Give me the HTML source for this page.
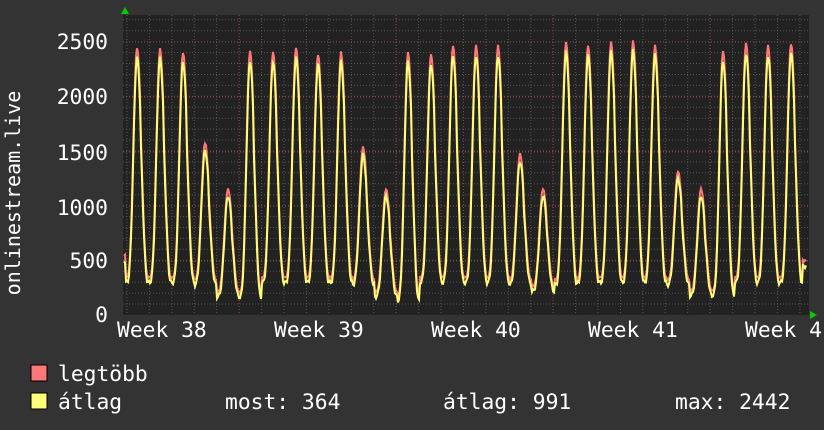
<!DOCTYPE html>
<html><head><meta charset="utf-8"><style>
body{margin:0;width:824px;height:430px;background:#333;overflow:hidden;font-family:"DejaVu Sans Mono","Liberation Mono",monospace;color:#fff}
.t{position:absolute;font-size:21.3px;white-space:pre;line-height:1}
</style></head><body>
<svg id="s" width="824" height="430" style="position:absolute;left:0;top:0">
<rect x="123" y="15" width="686" height="300" fill="#222"/>
<g id="grid"></g>
<polyline id="rmax" fill="none" stroke="#ff7777" stroke-width="2"/>
<polyline id="ravg" fill="none" stroke="#ffff77" stroke-width="2"/>
<polygon points="121,14 129,14 125,7" fill="#0c0"/>
<polygon points="810,311 810,319 817,315" fill="#0c0"/>
<rect x="31" y="365" width="16" height="16" fill="#ff7777" stroke="#000"/>
<rect x="31" y="393" width="16" height="16" fill="#ffff77" stroke="#000"/>
<text x="-193" y="20" transform="rotate(-90)" text-anchor="middle" fill="#fff" font-family="DejaVu Sans Mono,monospace" font-size="20">onlinestream.live</text>
</svg>
<div class="t" style="right:716px;top:32px">2500</div>
<div class="t" style="right:716px;top:87px">2000</div>
<div class="t" style="right:716px;top:143px">1500</div>
<div class="t" style="right:716px;top:198px">1000</div>
<div class="t" style="right:716px;top:251px">500</div>
<div class="t" style="right:716px;top:305px">0</div>
<div class="t" style="left:117px;top:320px">Week 38</div>
<div class="t" style="left:274px;top:320px">Week 39</div>
<div class="t" style="left:431px;top:320px">Week 40</div>
<div class="t" style="left:588px;top:320px">Week 41</div>
<div class="t" style="left:745px;top:320px">Week 4</div>
<div class="t" style="left:58px;top:364px">legtöbb</div>
<div class="t" style="left:58px;top:392px">átlag</div>
<div class="t" style="left:225px;top:392px">most: 364</div>
<div class="t" style="left:443px;top:392px">átlag: 991</div>
<div class="t" style="left:675px;top:392px">max: 2442</div>
<script>
var g=document.getElementById('grid'),h='';
for(var y=315-11;y>15;y-=10.93){h+='<line x1="123" x2="809" y1="'+y.toFixed(1)+'" y2="'+y.toFixed(1)+'" stroke="#555" stroke-dasharray="1,2"/>';}
for(var x=127;x<809;x+=22.43){h+='<line y1="15" y2="315" x1="'+x.toFixed(1)+'" x2="'+x.toFixed(1)+'" stroke="#555" stroke-dasharray="1,2"/>';}
[42,97,152,206,261].forEach(function(y){h+='<line x1="123" x2="809" y1="'+y+'" y2="'+y+'" stroke="#844" stroke-dasharray="1,2"/>';});
[239,396,553,710].forEach(function(x){h+='<line y1="15" y2="315" x1="'+x+'" x2="'+x+'" stroke="#844" stroke-dasharray="1,2"/>';});
g.innerHTML=h;
var P=[137,160,183,205,228,250,273,296,318,341,363,386,408,431,453,476,498,520,543,566,588,611,633,655,678,701,723,746,768,791];
var V=[2380,2370,2340,1520,1100,2350,2340,2380,2320,2340,1480,1100,2340,2320,2400,2400,2400,1420,1100,2430,2400,2430,2440,2400,1260,1100,2350,2420,2400,2420];
var MN=[300,300,300,280,170,160,300,300,300,300,280,170,130,300,300,300,300,280,220,280,300,300,300,300,280,180,180,300,300,300];
function val(x){for(var i=0;i<P.length;i++){var d=(x-P[i])/22.43;if(Math.abs(d)<0.5){var ph=Math.abs(d)*2;var mn=MN[i];var f=Math.pow(Math.cos(Math.min(ph,1)*Math.PI/2),4);if(d>0)f=Math.pow(Math.cos(Math.min(ph,1)*Math.PI/2),2.5)*(d<0.15?1:0.9);return mn+(V[i]-mn)*f;}}return x<130?500:450;}
function Y(v){return 315-v*0.1093;}
var a='',b='';
for(var x=124;x<=806;x+=1){var v=val(x);var j=Math.sin(x*1.7)*18;a+=x+','+Y(v*1.01+30+Math.abs(j)).toFixed(1)+' ';b+=x+','+Y(v*0.99+j).toFixed(1)+' ';}
document.getElementById('rmax').setAttribute('points',a);
document.getElementById('ravg').setAttribute('points',b);
</script>
</body></html>
